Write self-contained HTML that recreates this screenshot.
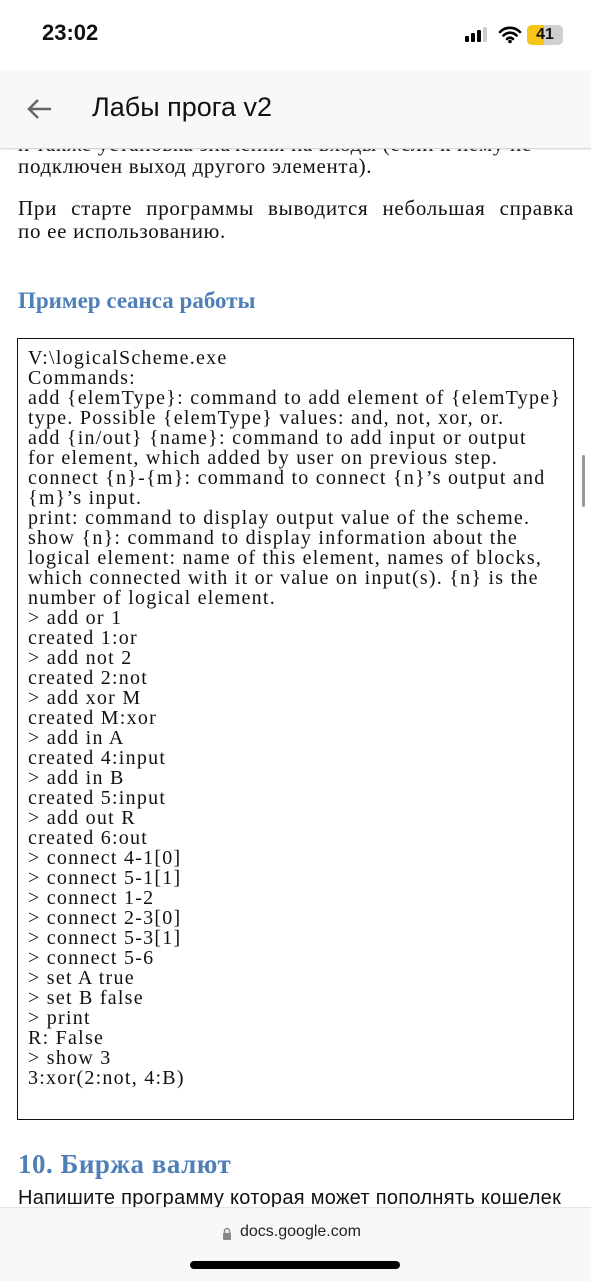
<!DOCTYPE html>
<html><head><meta charset="utf-8"><style>
body{margin:0;width:591px;height:1280px;overflow:hidden;background:#fff;position:relative;font-family:"Liberation Serif",serif;color:#111}
.abs{position:absolute}
.p{left:18px;width:556px;font-size:21px;letter-spacing:0.7px;line-height:23px}
.j{text-align:justify;text-align-last:justify}
pre{margin:0;font-family:"Liberation Serif",serif;font-size:20px;line-height:20px;letter-spacing:1.25px}
</style></head><body>
<div class="abs p" style="top:133px;color:#222;white-space:nowrap">и также установка значения на входы (если к нему не</div>
<div class="abs p" style="top:155px">подключен выход другого элемента).</div>
<div class="abs p j" style="top:197px">При старте программы выводится небольшая справка</div>
<div class="abs p" style="top:220px">по ее использованию.</div>
<div class="abs" style="left:18px;top:288px;font-size:23px;font-weight:bold;color:#4f7fb8">Пример сеанса работы</div>
<div class="abs" style="left:17px;top:338px;width:555px;height:780px;border:1.5px solid #111">
<pre style="padding:9px 0 0 10px">V:\logicalScheme.exe
Commands:
add {elemType}: command to add element of {elemType}
type. Possible {elemType} values: and, not, xor, or.
add {in/out} {name}: command to add input or output
for element, which added by user on previous step.
connect {n}-{m}: command to connect {n}’s output and
{m}’s input.
print: command to display output value of the scheme.
show {n}: command to display information about the
logical element: name of this element, names of blocks,
which connected with it or value on input(s). {n} is the
number of logical element.
&gt; add or 1
created 1:or
&gt; add not 2
created 2:not
&gt; add xor M
created M:xor
&gt; add in A
created 4:input
&gt; add in B
created 5:input
&gt; add out R
created 6:out
&gt; connect 4-1[0]
&gt; connect 5-1[1]
&gt; connect 1-2
&gt; connect 2-3[0]
&gt; connect 5-3[1]
&gt; connect 5-6
&gt; set A true
&gt; set B false
&gt; print
R: False
&gt; show 3
3:xor(2:not, 4:B)</pre></div>
<div class="abs" style="left:18px;top:1149px;font-size:27px;letter-spacing:0.5px;font-weight:bold;color:#4f7fb8">10. Биржа валют</div>
<div class="abs" style="left:18px;top:1187px;font-family:'Liberation Sans',sans-serif;font-size:20px;letter-spacing:0.3px">Напишите программу которая может пополнять кошелек</div>
<div class="abs" style="left:0;top:0;width:591px;height:148px;background:#f8f8f8;border-bottom:1px solid #d8d8d8;box-shadow:0 1px 2px rgba(0,0,0,.08)"></div>
<div class="abs" style="left:0;top:0;width:591px;height:70px;background:#fff"></div>
<div class="abs" style="left:42px;top:20px;font-family:'Liberation Sans',sans-serif;font-size:22px;font-weight:bold">23:02</div>
<svg class="abs" style="left:463px;top:26px" width="30" height="18"><rect x="2" y="10" width="4" height="6" rx="1"/><rect x="8" y="7" width="4" height="9" rx="1"/><rect x="14" y="4" width="4" height="12" rx="1"/><rect x="20" y="1" width="4" height="15" rx="1" fill="#ccc"/></svg>
<svg class="abs" style="left:498px;top:24px" width="24" height="20"><path d="M2 8a14 14 0 0 1 20 0M5.5 11.5a9 9 0 0 1 13 0M9 15a4 4 0 0 1 6 0" stroke="#000" stroke-width="2.6" fill="none" stroke-linecap="round"/><circle cx="12" cy="17.5" r="1.8"/></svg>
<div class="abs" style="left:527px;top:25px;width:36px;height:20px;border-radius:5px;background:#d0d0d0;overflow:hidden"><div style="width:17px;height:20px;background:#f5c518"></div><div class="abs" style="left:0;top:0;width:36px;text-align:center;font:bold 16px/20px 'Liberation Sans',sans-serif">41</div></div>
<svg class="abs" style="left:26px;top:98px" width="26" height="22"><path d="M25 11H3M12 2L3 11l9 9" stroke="#666" stroke-width="2.5" fill="none"/></svg>
<div class="abs" style="left:92px;top:92px;font-family:'Liberation Sans',sans-serif;font-size:27px;color:#111">Лабы прога v2</div>
<div class="abs" style="left:0;top:1207px;width:591px;height:73px;background:#f7f8fa;border-top:1px solid #e2e2e2"></div>
<svg class="abs" style="left:222px;top:1227px" width="10" height="13"><path d="M2.5 6V4a2.5 2.5 0 0 1 5 0v2" stroke="#888" stroke-width="1.5" fill="none"/><rect x="1" y="6" width="8" height="7" rx="1" fill="#888"/></svg>
<div class="abs" style="left:240px;top:1223px;font-family:'Liberation Sans',sans-serif;font-size:16px;color:#222">docs.google.com</div>
<div class="abs" style="left:190px;top:1261px;width:210px;height:8px;border-radius:4px;background:#000"></div>
<div class="abs" style="left:582px;top:455px;width:3px;height:52px;border-radius:2px;background:#999"></div>
</body></html>
